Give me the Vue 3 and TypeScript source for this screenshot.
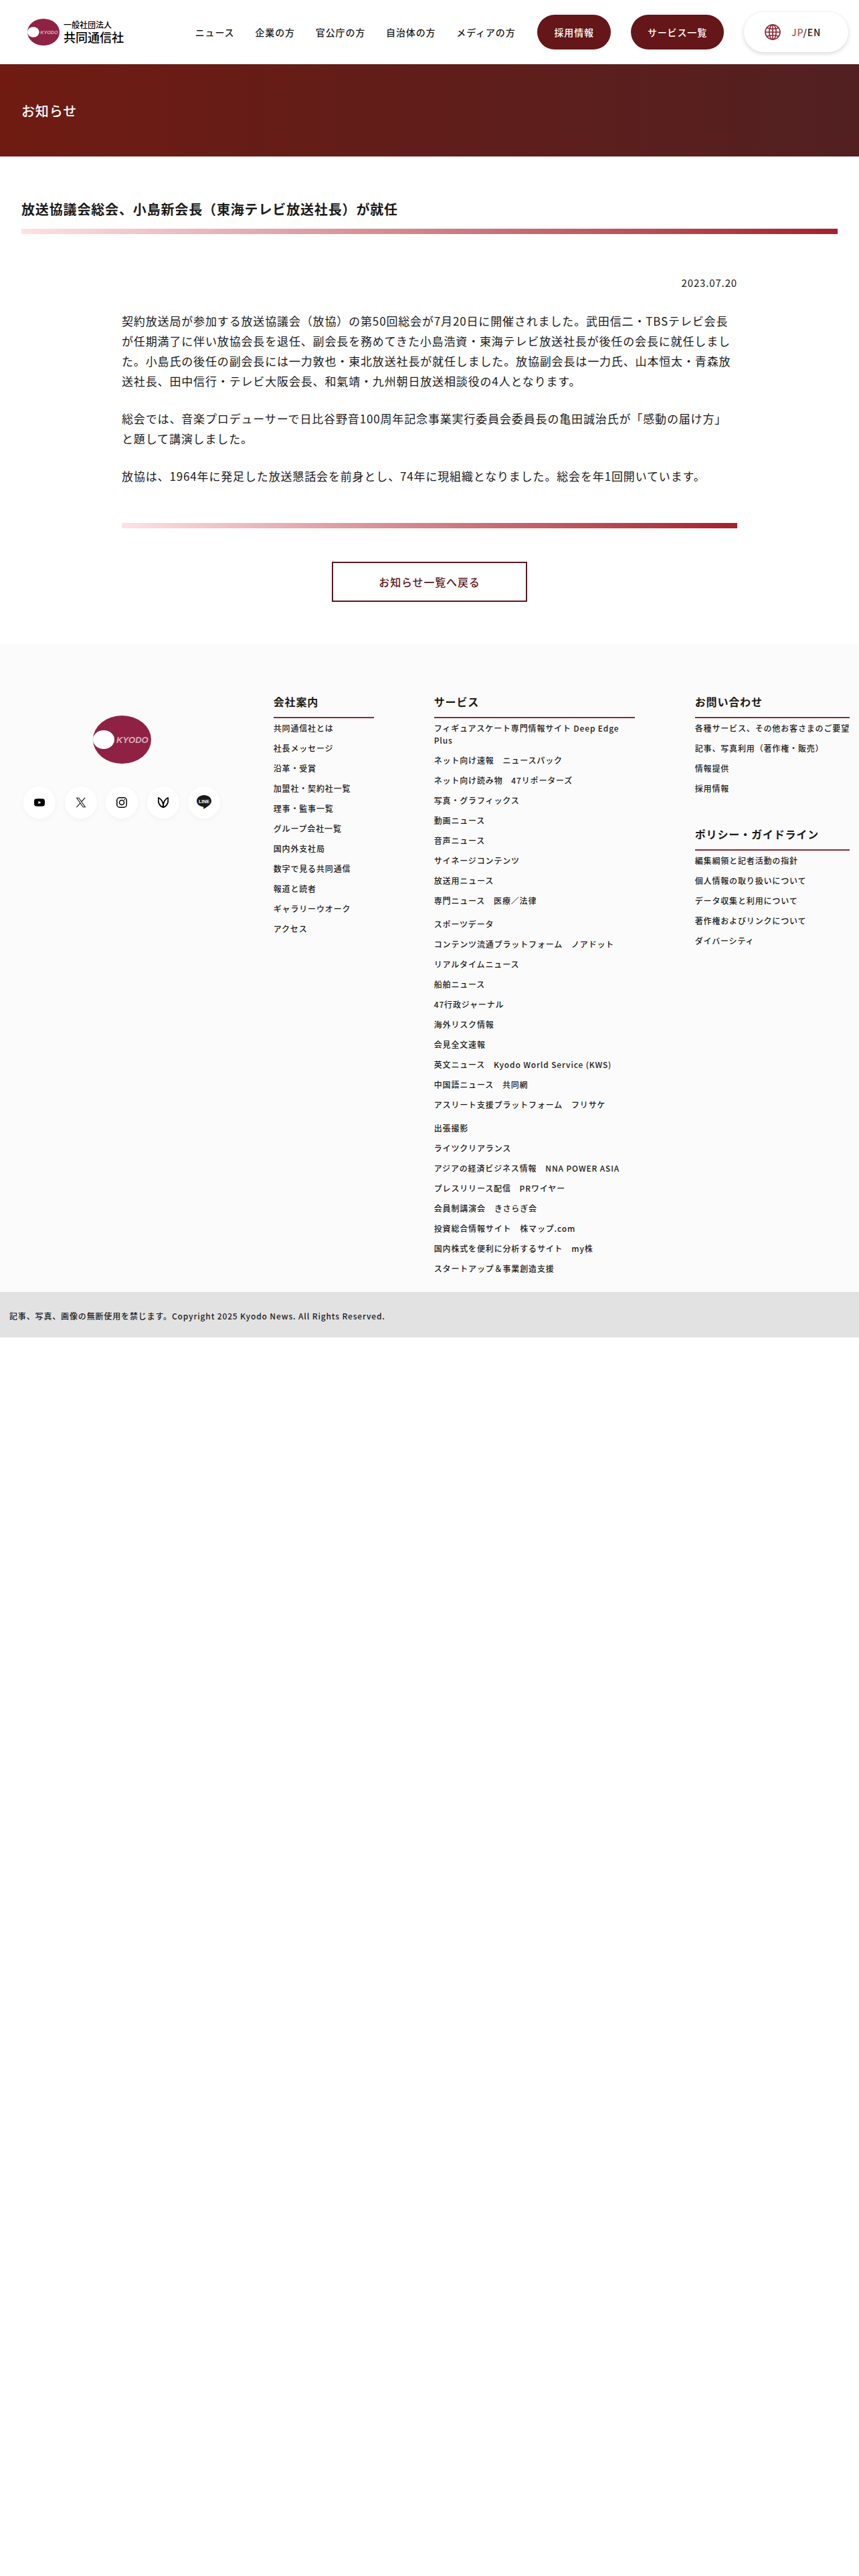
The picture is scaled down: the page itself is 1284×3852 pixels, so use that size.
<script setup lang="ts">
interface FooterGroup {
  title: string
  lists: string[][]
}

const navItems: string[] = ['ニュース', '企業の方', '官公庁の方', '自治体の方', 'メディアの方']

const paragraphs: string[] = [
  '契約放送局が参加する放送協議会（放協）の第50回総会が7月20日に開催されました。武田信二・TBSテレビ会長が任期満了に伴い放協会長を退任、副会長を務めてきた小島浩資・東海テレビ放送社長が後任の会長に就任しました。小島氏の後任の副会長には一力敦也・東北放送社長が就任しました。放協副会長は一力氏、山本恒太・青森放送社長、田中信行・テレビ大阪会長、和氣靖・九州朝日放送相談役の4人となります。',
  '総会では、音楽プロデューサーで日比谷野音100周年記念事業実行委員会委員長の亀田誠治氏が「感動の届け方」と題して講演しました。',
  '放協は、1964年に発足した放送懇話会を前身とし、74年に現組織となりました。総会を年1回開いています。',
]

const company: FooterGroup = {
  title: '会社案内',
  lists: [[
    '共同通信社とは', '社長メッセージ', '沿革・受賞', '加盟社・契約社一覧', '理事・監事一覧', 'グループ会社一覧',
    '国内外支社局', '数字で見る共同通信', '報道と読者', 'ギャラリーウオーク', 'アクセス',
  ]],
}

const services: FooterGroup = {
  title: 'サービス',
  lists: [
    [
      'フィギュアスケート専門情報サイト Deep Edge Plus', 'ネット向け速報　ニュースパック', 'ネット向け読み物　47リポーターズ',
      '写真・グラフィックス', '動画ニュース', '音声ニュース', 'サイネージコンテンツ', '放送用ニュース', '専門ニュース　医療／法律',
    ],
    [
      'スポーツデータ', 'コンテンツ流通プラットフォーム　ノアドット', 'リアルタイムニュース', '船舶ニュース', '47行政ジャーナル',
      '海外リスク情報', '会見全文速報', '英文ニュース　Kyodo World Service (KWS)', '中国語ニュース　共同網',
      'アスリート支援プラットフォーム　フリサケ',
    ],
    [
      '出張撮影', 'ライツクリアランス', 'アジアの経済ビジネス情報　NNA POWER ASIA', 'プレスリリース配信　PRワイヤー',
      '会員制講演会　きさらぎ会', '投資総合情報サイト　株マップ.com', '国内株式を便利に分析するサイト　my株',
      'スタートアップ＆事業創造支援',
    ],
  ],
}

const contact: FooterGroup = {
  title: 'お問い合わせ',
  lists: [['各種サービス、その他お客さまのご要望', '記事、写真利用（著作権・販売）', '情報提供', '採用情報']],
}

const policy: FooterGroup = {
  title: 'ポリシー・ガイドライン',
  lists: [[
    '編集綱領と記者活動の指針', '個人情報の取り扱いについて', 'データ収集と利用について', '著作権およびリンクについて', 'ダイバーシティ',
  ]],
}

const columns: { key: string; groups: FooterGroup[] }[] = [
  { key: 'company', groups: [company] },
  { key: 'services', groups: [services] },
  { key: 'support', groups: [contact, policy] },
]
</script>

<template>
  <div class="page">
    <header class="header">
      <a class="brand" href="#" aria-label="一般社団法人 共同通信社">
        <svg class="brand-mark" viewBox="0 0 87 72" preserveAspectRatio="none" aria-hidden="true">
          <ellipse cx="43.5" cy="36" rx="43.5" ry="36" fill="#8f2244" />
          <ellipse cx="16" cy="36" rx="16" ry="14" fill="#fff" />
          <text class="mark-text" x="35" y="41">KYODO</text>
        </svg>
        <span class="brand-name">
          <span class="brand-kind">一般社団法人</span>
          <span class="brand-main">共同通信社</span>
        </span>
      </a>
      <nav class="nav">
        <ul class="nav-list">
          <li v-for="item in navItems" :key="item"><a href="#">{{ item }}</a></li>
        </ul>
        <div class="actions">
          <a class="pill" href="#">採用情報</a>
          <a class="pill" href="#">サービス一覧</a>
          <div class="lang">
            <svg class="globe" viewBox="0 0 24 24" fill="none" stroke="#8a2432" stroke-width="1.6" aria-hidden="true">
              <circle cx="12" cy="12" r="11" />
              <ellipse cx="12" cy="12" rx="5.2" ry="11" />
              <path d="M12 1v22M1 12h22M3.4 5.6c5 2.2 12.2 2.2 17.2 0M3.4 18.4c5-2.2 12.2-2.2 17.2 0" />
            </svg>
            <span><a class="lang-current" href="#">JP</a>/<a href="#">EN</a></span>
          </div>
        </div>
      </nav>
    </header>

    <div class="hero"><p>お知らせ</p></div>

    <main class="main">
      <h1 class="title">放送協議会総会、小島新会長（東海テレビ放送社長）が就任</h1>
      <div class="bar"></div>
      <article class="article">
        <time class="date" datetime="2023-07-20">2023.07.20</time>
        <p v-for="(text, i) in paragraphs" :key="i" class="para">{{ text }}</p>
        <div class="bar"></div>
      </article>
      <a class="back" href="#">お知らせ一覧へ戻る</a>
    </main>

    <footer class="footer">
      <div class="footer-body">
        <div class="footer-brand">
          <a href="#" aria-label="KYODO">
            <svg class="footer-mark" viewBox="0 0 87 72" aria-hidden="true">
              <ellipse cx="43.5" cy="36" rx="43.5" ry="36" fill="#8f2244" />
              <ellipse cx="16" cy="36" rx="16" ry="14" fill="#fff" />
              <text class="mark-text" x="35" y="41">KYODO</text>
            </svg>
          </a>
          <ul class="social">
            <li>
              <a href="#" aria-label="YouTube">
                <svg width="16" height="16" viewBox="0 0 16 16">
                  <path fill="#000" d="M2.5 2.6Q8 2 13.5 2.6 15.6 2.8 15.8 4.8 16.2 8 15.8 11.2 15.6 13.2 13.5 13.4 8 14 2.5 13.4.4 13.2.2 11.2-.2 8 .2 4.8.4 2.8 2.5 2.6Z" />
                  <path fill="#fff" d="M6.4 5.7v4.6L10.4 8Z" />
                </svg>
              </a>
            </li>
            <li>
              <a href="#" aria-label="X">
                <svg width="16" height="16" viewBox="0 0 24 24">
                  <path fill="#000" d="M14.095 10.317 22.286 1h-1.94l-7.113 8.088L7.551 1H1l8.59 12.231L1 23h1.94l7.511-8.543L16.45 23H23ZM11.436 13.34l-.871-1.218L3.64 2.432h2.98l5.59 7.821.869 1.219 7.268 10.166h-2.982Z" />
                </svg>
              </a>
            </li>
            <li>
              <a href="#" aria-label="Instagram">
                <svg width="16" height="16" viewBox="0 0 16 16" fill="none" stroke="#000" stroke-width="1.5">
                  <rect x=".8" y=".8" width="14.4" height="14.4" rx="4" />
                  <circle cx="8" cy="8" r="3.5" />
                  <circle cx="12.2" cy="3.8" r=".9" fill="#000" stroke="none" />
                </svg>
              </a>
            </li>
            <li>
              <a href="#" aria-label="47NEWS">
                <svg width="16" height="16" viewBox="0 0 16 16" fill="none" stroke="#000" stroke-width="1.8" stroke-linejoin="round">
                  <path d="M8 15C3.500 14.500-.5 9 1 1 5 2.500 8.500 7.500 8 15Z" />
                  <path d="M8 15C12.500 14.500 16.500 9 15 1 11 2.500 7.500 7.500 8 15Z" />
                </svg>
              </a>
            </li>
            <li>
              <a href="#" aria-label="LINE">
                <svg width="22" height="22" viewBox="0 0 22 22">
                  <path fill="#1a1a1a" d="M11 0C4.900 0 0 3.900 0 8.800c0 4.300 3.900 7.900 9.200 8.600 1.300.2 1.300.7 1 2.700-.1.600.4.600.8.300 3-1.700 7-4.200 9-6.600 1.300-1.500 2-3.200 2-5C22 3.900 17.100 0 11 0Z" />
                  <text class="line-text" x="11" y="12" text-anchor="middle">LINE</text>
                </svg>
              </a>
            </li>
          </ul>
        </div>
        <div class="footer-nav">
          <div v-for="col in columns" :key="col.key" class="column" :class="col.key">
            <section v-for="group in col.groups" :key="group.title">
              <h2 class="group-title">{{ group.title }}</h2>
              <ul v-for="(list, i) in group.lists" :key="i" class="links">
                <li v-for="link in list" :key="link"><a href="#">{{ link }}</a></li>
              </ul>
            </section>
          </div>
        </div>
      </div>
      <p class="copyright">記事、写真、画像の無断使用を禁じます。Copyright 2025 Kyodo News. All Rights Reserved.</p>
    </footer>
  </div>
</template>

<style>
body {
  margin: 0;
  background: #fff;
}
</style>

<style scoped>
.page {
  font-family: "Noto Sans CJK JP", sans-serif;
  font-size: 17px;
  letter-spacing: 0.05em;
  color: #1a1a1a;
}

a {
  color: inherit;
  text-decoration: none;
}

ul,
p,
h1,
h2 {
  margin: 0;
  padding: 0;
  list-style: none;
}

.header {
  display: flex;
  align-items: center;
  justify-content: space-between;
  height: 96px;
  padding: 0 16px 0 41px;
}

.brand {
  display: flex;
  align-items: center;
  gap: 6px;
  color: #000;
  letter-spacing: 0;
  font-weight: 500;
}

.brand-mark {
  width: 48px;
  height: 40px;
}

.mark-text {
  font: italic bold 13px "Liberation Sans", sans-serif;
  letter-spacing: 0;
  fill: #d9aebb;
}

.brand-name {
  display: flex;
  flex-direction: column;
}

.brand-kind {
  font-size: 12px;
  line-height: 14px;
}

.brand-main {
  font-size: 18px;
  line-height: 22px;
}

.nav,
.actions {
  display: flex;
  align-items: center;
  font-size: 14px;
  font-weight: 500;
}

.nav {
  gap: 33px;
}

.nav-list {
  display: flex;
  gap: 31px;
}

.actions {
  gap: 30px;
  line-height: 20px;
}

.pill {
  padding: 16px 25px;
  border-radius: 26px;
  background: #641618;
  color: #fff;
}

.lang {
  display: flex;
  align-items: center;
  gap: 16px;
  box-sizing: border-box;
  width: 156px;
  height: 60px;
  padding: 0 31px;
  border-radius: 30px;
  background: #fff;
  box-shadow: 0 2px 6px rgba(0, 0, 0, 0.16);
}

.globe {
  width: 24px;
  height: 24px;
}

.lang-current {
  color: #b0545e;
}

.hero {
  display: flex;
  align-items: center;
  height: 138px;
  padding: 0 32px;
  background: linear-gradient(90deg, #6f1b12, #522021);
  color: #fff;
  font-size: 20px;
  font-weight: 500;
}

.main {
  display: flex;
  flex-direction: column;
  padding: 64px 32px 63px;
}

.title {
  margin-bottom: 14px;
  font-size: 20px;
  font-weight: 700;
  line-height: 30px;
}

.bar {
  height: 8px;
  background: linear-gradient(90deg, #fde2e4, #a4202c);
}

.article {
  display: flex;
  flex-direction: column;
  gap: 26px;
  width: 100%;
  max-width: 920px;
  margin: 61px auto 50px;
}

.article .bar {
  margin-top: 29px;
}

.date {
  align-self: flex-end;
  margin-bottom: 4px;
  font-size: 15px;
  line-height: 24px;
}

.para {
  line-height: 30px;
}

.back {
  align-self: center;
  box-sizing: border-box;
  width: 292px;
  padding: 16px;
  border: 2px solid #5a1820;
  color: #5a1820;
  font-size: 16px;
  font-weight: 500;
  line-height: 24px;
  text-align: center;
}

.footer {
  background: #fbfbfb;
  font-weight: 500;
}

.footer-body {
  display: flex;
  gap: 58px;
  padding: 74px 14px 26px;
}

.footer-brand {
  flex: 1;
  display: flex;
  flex-direction: column;
  align-items: center;
  gap: 34px;
  padding-top: 33px;
}

.footer-mark {
  display: block;
  width: 87px;
  height: 72px;
}

.social {
  display: flex;
  justify-content: space-between;
  width: 294px;
}

.social a {
  display: flex;
  align-items: center;
  justify-content: center;
  width: 48px;
  height: 48px;
  border-radius: 50%;
  background: #fff;
  box-shadow: 0 2px 8px rgba(0, 0, 0, 0.04);
}

.line-text {
  font: bold 7px "Liberation Sans", sans-serif;
  letter-spacing: 0;
  fill: #fff;
}

.footer-nav {
  display: flex;
  gap: 90px;
}

.column {
  display: flex;
  flex-direction: column;
  gap: 47px;
}

.company {
  width: 150px;
}

.services {
  width: 300px;
}

.support {
  white-space: nowrap;
}

.group-title {
  margin-bottom: 6px;
  padding-bottom: 11px;
  border-bottom: 2px solid #8c2a33;
  font-size: 16px;
  font-weight: 700;
  line-height: 24px;
}

.links {
  display: flex;
  flex-direction: column;
  gap: 12px;
  font-size: 12px;
  line-height: 18px;
}

.links + .links {
  margin-top: 17px;
}

.copyright {
  padding: 27px 14px 23px;
  background: #e2e2e2;
  font-size: 12px;
  line-height: 18px;
}
</style>
